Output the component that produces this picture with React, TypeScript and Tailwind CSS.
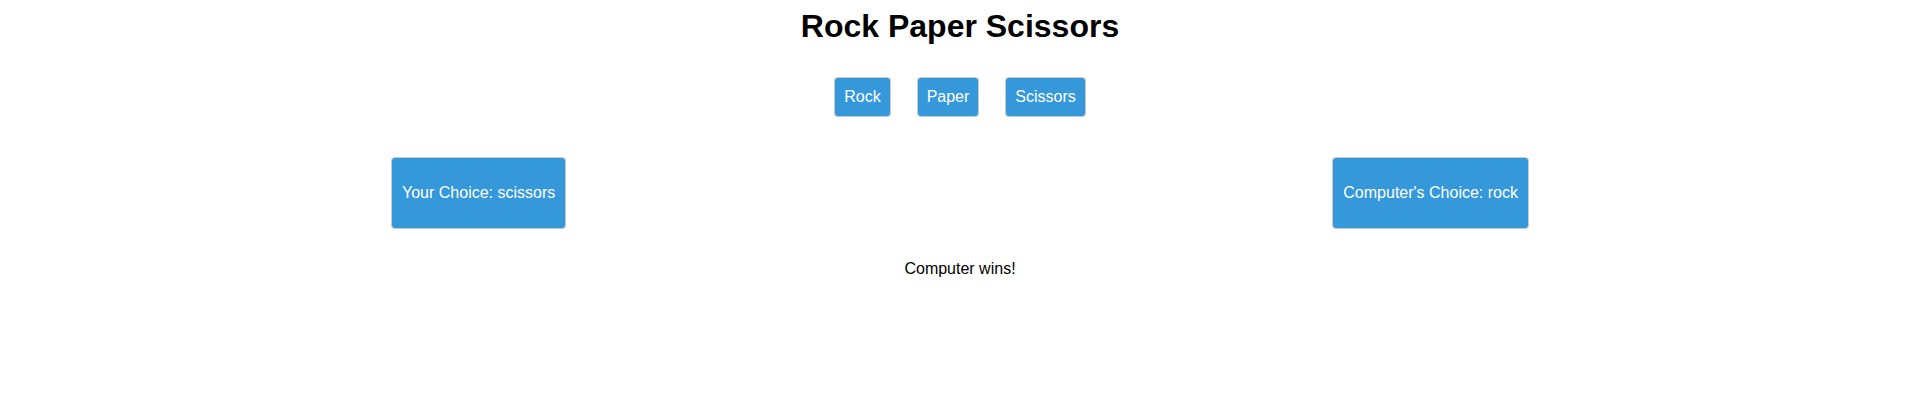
import React from "react";

const choices = ["Rock", "Paper", "Scissors"];

export default function App() {
  return (
    <div className="min-h-[411px] bg-white px-[8px] pt-[8px] font-['Liberation_Sans',Arial,sans-serif] text-black">
      <h1 className="text-center text-[32px] font-bold leading-[37px]">
        Rock Paper Scissors
      </h1>

      {/* choice buttons */}
      <div className="mt-[32px] flex justify-center gap-[26px]">
        {choices.map((c) => (
          <button
            key={c}
            className="h-[40px] rounded-[4px] border border-[#c8c8c8] bg-[#3498db] px-[9px] text-[16px] leading-[18px] text-white"
          >
            {c}
          </button>
        ))}
      </div>

      {/* picks */}
      <div className="mt-[40px] flex justify-around">
        <div className="flex h-[72px] items-center rounded-[4px] border border-[#c8c8c8] bg-[#3498db] px-[10px] text-[16px] leading-[18px] text-white">
          Your Choice: scissors
        </div>
        <div className="flex h-[72px] items-center rounded-[4px] border border-[#c8c8c8] bg-[#3498db] px-[10px] text-[16px] leading-[18px] text-white">
          Computer's Choice: rock
        </div>
      </div>

      <p className="mt-[31px] text-center text-[16px] leading-[18px]">
        Computer wins!
      </p>
    </div>
  );
}
